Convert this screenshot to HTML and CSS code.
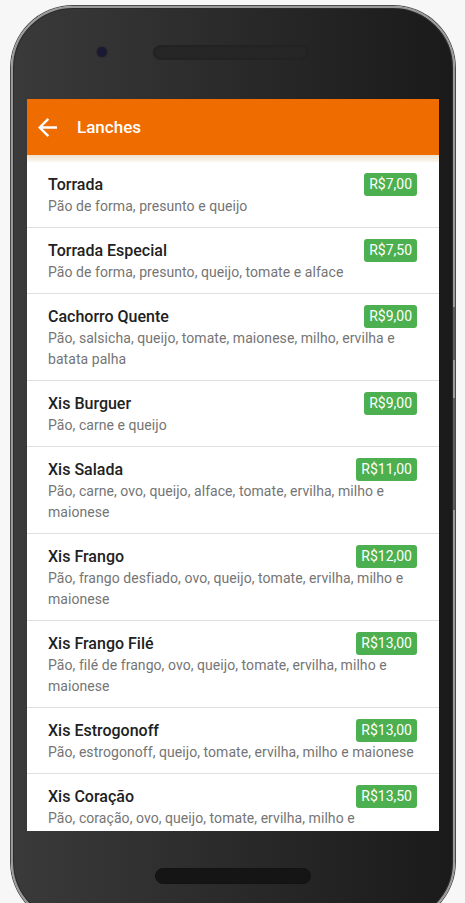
FILE: index.html
```html
<!DOCTYPE html>
<html lang="pt-BR">
<head>
    <meta charset="UTF-8">
    <meta name="viewport" content="width=device-width, initial-scale=1.0">
    <title>Lanches</title>
    <link rel="stylesheet" href="styles.css">
</head>
<body>
    <div class="phone">
        <span class="sideBtn btnPower"></span>
        <span class="sideBtn btnVolume"></span>
        <div class="phoneTop">
            <span class="camera"></span>
            <span class="speaker"></span>
        </div>

        <div class="screen">
            <header class="appbar">
                <svg class="back" viewBox="4 4 16 16" width="19" height="19">
                    <path d="M20 11H7.83l5.59-5.59L12 4l-8 8 8 8 1.41-1.41L7.83 13H20v-2z" fill="#fff"/>
                </svg>
                <span class="title">Lanches</span>
            </header>
            <div class="appbarShadow"></div>

            <ul class="menu">
                <li class="item">
                    <div class="itemHead"><span class="itemName">Torrada</span><span class="price">R$7,00</span></div>
                    <p class="itemDesc">Pão de forma, presunto e queijo</p>
                </li>
                <li class="item">
                    <div class="itemHead"><span class="itemName">Torrada Especial</span><span class="price">R$7,50</span></div>
                    <p class="itemDesc">Pão de forma, presunto, queijo, tomate e alface</p>
                </li>
                <li class="item">
                    <div class="itemHead"><span class="itemName">Cachorro Quente</span><span class="price">R$9,00</span></div>
                    <p class="itemDesc">Pão, salsicha, queijo, tomate, maionese, milho, ervilha e batata palha</p>
                </li>
                <li class="item">
                    <div class="itemHead"><span class="itemName">Xis Burguer</span><span class="price">R$9,00</span></div>
                    <p class="itemDesc">Pão, carne e queijo</p>
                </li>
                <li class="item">
                    <div class="itemHead"><span class="itemName">Xis Salada</span><span class="price">R$11,00</span></div>
                    <p class="itemDesc">Pão, carne, ovo, queijo, alface, tomate, ervilha, milho e maionese</p>
                </li>
                <li class="item">
                    <div class="itemHead"><span class="itemName">Xis Frango</span><span class="price">R$12,00</span></div>
                    <p class="itemDesc">Pão, frango desfiado, ovo, queijo, tomate, ervilha, milho e maionese</p>
                </li>
                <li class="item">
                    <div class="itemHead"><span class="itemName">Xis Frango Filé</span><span class="price">R$13,00</span></div>
                    <p class="itemDesc">Pão, filé de frango, ovo, queijo, tomate, ervilha, milho e maionese</p>
                </li>
                <li class="item">
                    <div class="itemHead"><span class="itemName">Xis Estrogonoff</span><span class="price">R$13,00</span></div>
                    <p class="itemDesc">Pão, estrogonoff, queijo, tomate, ervilha, milho e maionese</p>
                </li>
                <li class="item">
                    <div class="itemHead"><span class="itemName">Xis Coração</span><span class="price">R$13,50</span></div>
                    <p class="itemDesc">Pão, coração, ovo, queijo, tomate, ervilha, milho e maionese</p>
                </li>
            </ul>
        </div>

        <div class="phoneBottom">
            <span class="speaker speakerBottom"></span>
        </div>
    </div>
</body>
</html>
```

FILE: styles.css
```css
html, body {
    overflow: hidden;
}
body {
    margin: 0;
    padding: 0;
    background-color: #f7f7f7;
    font-family: Roboto, "Liberation Sans", sans-serif;
}

/* phone frame */
.phone {
    position: relative;
    width: 444px;
    height: 918px;
    margin: 6px 0 0 11px;
    padding: 0 14px;
    box-sizing: border-box;
    display: flex;
    flex-direction: column;
    border: 2px solid #9a9a9a;
    border-radius: 62px;
    background: linear-gradient(to right, #3a3a3a, #1a1a1a);
    box-shadow: 0 0 0 1px #4a4a4a, inset 0 0 0 1px #2a2a2a;
}
.sideBtn {
    position: absolute;
    right: -2px;
    width: 2px;
    background-color: #5c5c5c;
}
.btnPower {
    top: 299px;
    height: 53px;
}
.btnVolume {
    top: 390px;
    height: 112px;
}
.phoneTop {
    height: 91px;
    padding-top: 37px;
    box-sizing: border-box;
    display: flex;
    align-items: flex-start;
}
.camera {
    width: 10px;
    height: 10px;
    margin-left: 70px;
    margin-top: 2px;
    border-radius: 50%;
    background-color: #1b1a33;
    box-shadow: 0 0 0 1px #2c2c30;
}
.speaker {
    width: 156px;
    height: 15px;
    margin-left: 46px;
    border-radius: 8px;
    background-color: #262626;
    box-shadow: inset 0 0 2px #1c1c1c;
    border: 1px solid #222;
    box-sizing: border-box;
}

/* screen */
.screen {
    height: 732px;
    background-color: #fff;
    overflow: hidden;
    display: flex;
    flex-direction: column;
}
.appbar {
    height: 56px;
    flex: none;
    display: flex;
    align-items: center;
    background-color: #ef6c00;
    color: #fff;
}
.back {
    margin-left: 11px;
    margin-right: 20px;
}
.title {
    font-size: 17px;
    font-weight: 500;
}
.appbarShadow {
    height: 7px;
    flex: none;
    background: linear-gradient(#efe2cd, #fbf7f1);
}
.menu {
    list-style: none;
    margin: 0;
    padding: 0;
}
.item {
    padding: 11px 22px 10px 21px;
    border-bottom: 1px solid #e0e0e0;
}
.itemHead {
    display: flex;
    justify-content: space-between;
    align-items: center;
    height: 23px;
}
.itemName {
    font-size: 16px;
    font-weight: 500;
    color: #212121;
}
.price {
    height: 23px;
    line-height: 23px;
    padding: 0 5px;
    border-radius: 3px;
    background-color: #4caf50;
    color: #fff;
    font-size: 14px;
}
.itemDesc {
    margin: 0;
    font-size: 14px;
    line-height: 21px;
    letter-spacing: 0.06px;
    color: #757575;
}

.phoneBottom {
    display: flex;
    justify-content: center;
    padding-top: 37px;
}
.speakerBottom {
    margin-left: 0;
    height: 16px;
    background-color: #151515;
    border-color: #121212;
}
```
